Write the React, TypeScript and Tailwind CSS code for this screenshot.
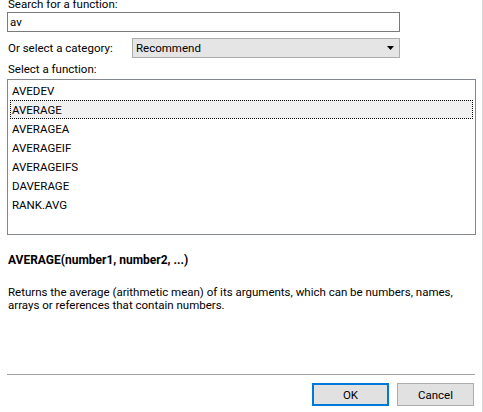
import React from "react";

const items = ["AVEDEV", "AVERAGE", "AVERAGEA", "AVERAGEIF", "AVERAGEIFS", "DAVERAGE", "RANK.AVG"];

export default function App() {
  return (
    <div
      className="w-[483px] h-[412px] bg-white overflow-hidden flex flex-col border-r border-[#d6d6d6] text-[11.5px] text-black"
      style={{ fontFamily: 'Roboto, "Noto Sans", sans-serif' }}
    >
      <div className="flex-1 flex flex-col px-[7px]">
        <div className="mt-[-4px] h-[16px] leading-[16px] pl-[1px]">Search for a function:</div>
        <div className="h-[20px] w-[393px] border border-[#7a7a7a] flex items-center pl-[2px] leading-[16px]">av</div>
        <div className="mt-[6px] h-[20px] flex items-center">
          <div className="w-[125px] pl-[1px] leading-[16px]">Or select a category:</div>
          <div className="w-[268px] h-[20px] bg-[#e5e5e5] border border-[#acacac] flex items-center justify-between pl-[3px] pr-[4px] leading-[16px]">
            <span>Recommend</span>
            <svg width="8" height="5" viewBox="0 0 8 5">
              <polygon points="0,0 7,0 3.5,4" fill="#000" />
            </svg>
          </div>
        </div>
        <div className="mt-[3px] h-[16px] leading-[16px] pl-[1px]">Select a function:</div>
        <div className="mt-[2px] w-[469px] h-[156px] border border-[#828790] pt-[1px] flex flex-col">
          {items.map((it, i) =>
            i === 1 ? (
              <div
                key={it}
                className="h-[19px] mx-[2px] border border-dotted border-black bg-[#f0f0f0] pl-[1px] flex items-center leading-[16px]"
              >
                {it}
              </div>
            ) : (
              <div key={it} className="h-[19px] pl-[4px] flex items-center leading-[16px]">
                {it}
              </div>
            )
          )}
        </div>
        <div className="mt-[17px] h-[16px] leading-[16px] pl-[1px] font-bold text-[12px]">
          AVERAGE(number1, number2, ...)
        </div>
        <div className="mt-[18px] leading-[13px] pl-[1px] w-[467px]">
          Returns the average (arithmetic mean) of its arguments, which can be numbers, names, arrays or references
          that contain numbers.
        </div>
      </div>
      <div className="mx-[7px] w-[468px] h-px bg-[#a0a0a0]" />
      <div className="mt-[8px] mb-[6px] flex justify-end gap-[8px] pr-[8px]">
        <button className="w-[77px] h-[23px] bg-[#e1e1e1] border-2 border-[#0078d7] leading-[16px]">OK</button>
        <button className="w-[77px] h-[23px] bg-[#e1e1e1] border border-[#adadad] leading-[16px]">Cancel</button>
      </div>
    </div>
  );
}
